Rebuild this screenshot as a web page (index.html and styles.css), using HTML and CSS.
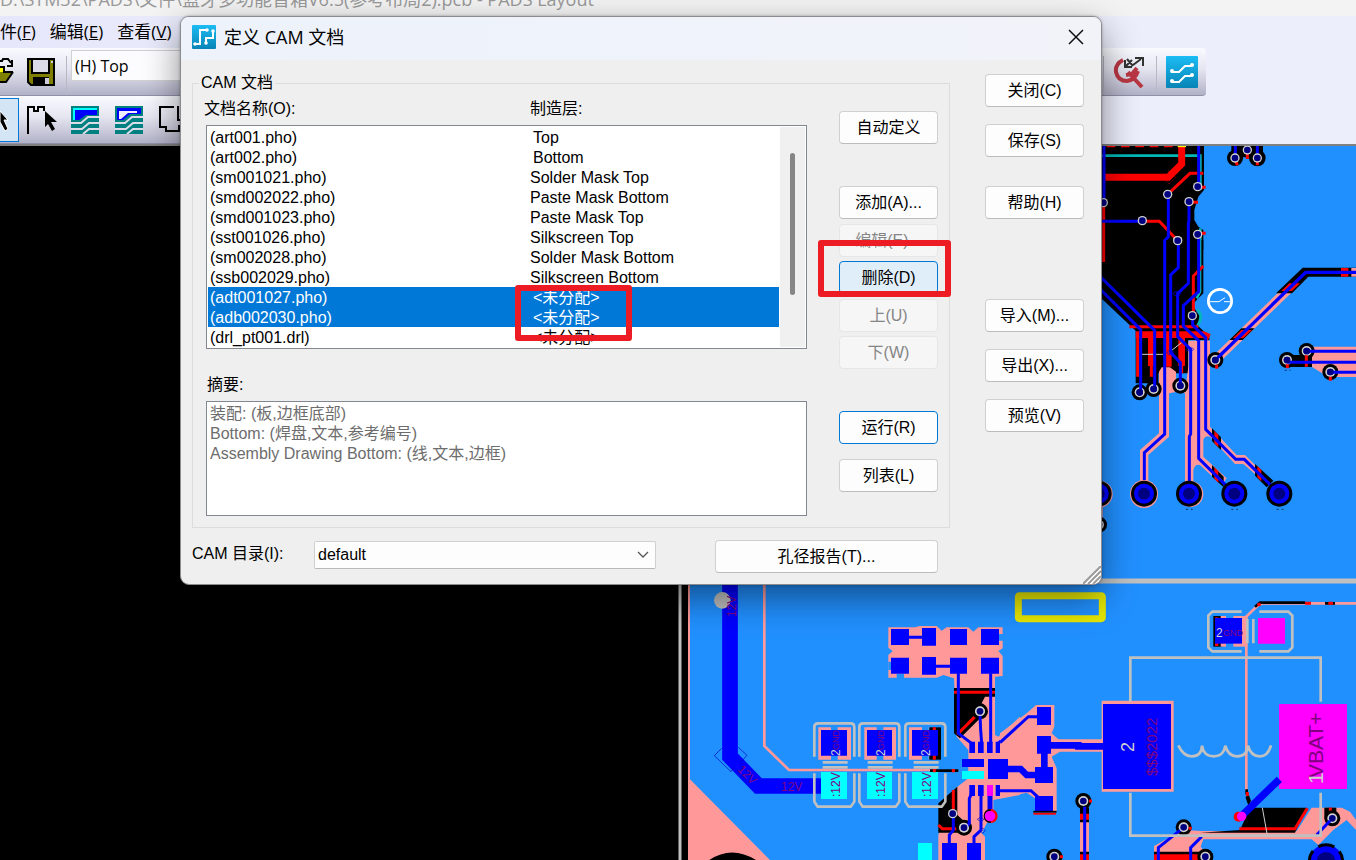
FILE: index.html
```html
<!DOCTYPE html>
<html lang="zh-CN">
<head>
<meta charset="utf-8">
<title>PADS Layout</title>
<link rel="stylesheet" href="styles.css">
</head>
<body>
<div class="app">
  <header class="titlebar"><span>D:\STM32\PADS\文件\蓝牙多功能音箱V6.5(参考布局2).pcb - PADS Layout</span></header>
  <nav class="menubar">
    <button type="button">件(<u>F</u>)</button>
    <button type="button">编辑(<u>E</u>)</button>
    <button type="button">查看(<u>V</u>)</button>
  </nav>
  <div class="toolbar-area">
    <div class="toolbar toolbar-main">
      <button type="button" class="tool tool-open" aria-label="打开">
        <svg width="14" height="28" viewBox="0 0 14 28"><path d="M0 3h2l1-2h5l3 4M12 2v6H7" fill="none" stroke="#000" stroke-width="2"/><path d="M0 10h4v5H0z" fill="#ff0"/><path d="M0 14h13l-7 11H0z" fill="#808000"/><path d="M0 9h4v5h9M13 14L6 24H0" fill="none" stroke="#000" stroke-width="2"/></svg>
      </button>
      <button type="button" class="tool" aria-label="保存">
        <svg width="28" height="28" viewBox="0 0 28 28"><path d="M1 1h26v26H4l-3-3z" fill="#808000" stroke="#000" stroke-width="2"/><path d="M5 1h17v14H5z" fill="#dcdce8" stroke="#000" stroke-width="2"/><path d="M6 19h16v8H6z"/><path d="M18 20h4v6h-4z" fill="#ccd"/><path d="M24 3h2v2h-2z" fill="#ccd"/></svg>
      </button>
      <i class="sep"></i>
      <select class="layer" aria-label="层"><option>(H) Top</option></select>
      <i class="sep push"></i>
      <button type="button" class="tool tool-end" aria-label="快速缩放">
        <svg width="32" height="32" viewBox="0 0 32 32"><path d="M10 4Q2 8 3 16Q5 25 14 25Q22 24 25 15M15 16l14 15M13 19l6-1 5-6" fill="none" stroke="#b83743" stroke-width="4"/><path d="M12 11l7-7M20 9l8-6M12 4v7h7M22 2h8v8M14 3l6 7" fill="none" stroke="#333" stroke-width="2"/></svg>
      </button>
      <i class="sep"></i>
      <button type="button" class="tool tool-end" aria-label="布线">
        <svg width="32" height="32" viewBox="0 0 32 32"><defs><linearGradient id="sky" x2="0" y2="1"><stop stop-color="#1bbcf4"/><stop offset="1" stop-color="#0784b6"/></linearGradient></defs><rect width="32" height="32" rx="1" fill="url(#sky)"/><g fill="none" stroke="#fff" stroke-width="2"><path d="M5 16h8l6-6h6M5 26h8l6-6h6"/><g fill="#fff"><circle cx="6" cy="15" r="1"/><circle cx="26" cy="9" r="1"/><circle cx="6" cy="25" r="1"/><circle cx="26" cy="19" r="1"/></g></g></svg>
      </button>
    </div>
    <div class="toolbar toolbar-draw">
      <button type="button" class="tool tool-active" aria-label="选择">
        <svg width="17" height="28" viewBox="0 0 17 28"><path d="M0 5l8 9H4l4 9-3 2-5-9z" stroke="#fff" stroke-width="1"/></svg>
      </button>
      <button type="button" class="tool tool-draw" aria-label="绘图">
        <svg width="30" height="28" viewBox="0 0 30 28"><path d="M1 28V1h6v4h4V1h6v4" fill="none" stroke="#000" stroke-width="2"/><path d="M18 5l12 11h-6l4 7-3 2-4-7-3 3z"/></svg>
      </button>
      <button type="button" class="tool" aria-label="灌铜">
        <svg width="28" height="28" viewBox="0 0 28 28"><path d="M0 0h28v28H0z" fill="#008080"/><path d="M2 2h24v2H4v10H2z" fill="#0ff"/><path d="M4 4h22v5H15l-7 5H4z" fill="#00f"/><path d="M28 11H17l-7 6H0M28 17H18l-7 6H0M28 23H18l-6 5" fill="none" stroke="#dcdce8" stroke-width="2"/></svg>
      </button>
      <button type="button" class="tool" aria-label="覆铜平面">
        <svg width="28" height="28" viewBox="0 0 28 28"><path d="M0 0h28v28H0z" fill="#008080"/><path d="M2 2h24v6H15l-7 6H2z" fill="#00f"/><path d="M4 5h18v2h-9l-7 6H4z" fill="#eef"/><path d="M28 11H17l-7 6H0M28 17H18l-7 6H0M28 23H18l-6 5" fill="none" stroke="#dcdce8" stroke-width="2"/></svg>
      </button>
      <button type="button" class="tool" aria-label="板框">
        <svg width="28" height="28" viewBox="0 0 28 28"><path d="M15 1H1v20h6v4h13v-6M19 0v14h8" fill="none" stroke="#000" stroke-width="2"/></svg>
      </button>
    </div>
  </div>
  <main class="workspace">
    <svg class="board" viewBox="0 146 1356 714" preserveAspectRatio="xMinYMin slice" aria-label="PCB">
      <defs>
        <g id="via"><circle r="14" fill="#d0d0d0"/><circle r="10" fill="#000080"/></g>
        <g id="bvia"><circle r="24" fill="#000"/><circle r="15" fill="#d0d0d0"/><circle r="10" fill="#000080"/></g>
        <g id="pad"><circle r="39" fill="#000"/><circle r="30" fill="#00f"/><circle r="18" fill="#000080"/></g>
      </defs>
      <path d="M688 146h668v714H688z" fill="#2190ff"/>
      <path d="M680 581H1356" stroke="#c0c0c0" stroke-width="5"/><path d="M680 581V860" stroke="#c0c0c0" stroke-width="3"/>

      <g transform="translate(1090 0) scale(.33333)" fill="none">
        <path d="M33 437H342V570L325 590 313 630V660L325 680 340 690V750H33zM424 437h95v35h-95z" fill="#000"/>
        <g fill="#000"><circle cx="435" cy="474" r="24"/><circle cx="502" cy="474" r="25"/></g>
        <path d="M436 437v30M502 437v30" stroke="#00f" stroke-width="9"/>
        <path d="M472 455v22M436 480l6 16M502 480v16" stroke="#f00" stroke-width="9"/>
        <path d="M33 467H331V570M331 685V750" stroke="#00b8b8" stroke-width="8"/>
        <path d="M50 439H263" stroke="#f00" stroke-width="5" stroke-dasharray="26 17"/>
        <path d="M45 532H235L275 492V440" stroke="#f00" stroke-width="21"/><path d="M263 439h25" stroke="#ff0" stroke-width="5"/>
        <path d="M222 535l15 17 20-20-22-20" stroke="#f00" stroke-width="2" stroke-dasharray="3 3"/>
        <path d="M233 583L300 520H340M157 664H208L263 722M323 562h24M300 607h24M323 700h24M41 620V750" stroke="#f00" stroke-width="9"/>
        <path d="M42 437V608M326 437V560M235 590V710L224 722V750M297 605V660L295 670V750M264 722V750M326 703V750M33 664H157" stroke="#00f" stroke-width="9"/>
        <use href="#via" x="233" y="583"/><use href="#via" x="297" y="605"/><use href="#via" x="323" y="560"/><use href="#via" x="157" y="662"/><use href="#via" x="263" y="722"/><use href="#via" x="323" y="703"/><use href="#via" x="40" y="608"/><use href="#via" x="435" y="474"/><use href="#via" x="472" y="450"/><use href="#via" x="502" y="474"/>
      </g>

      <g transform="translate(1090 240) scale(.33333)" fill="none">
        <path d="M33 0H340V160L320 180 307 195 320 215 332 232 322 255 358 290V300H295V400H205V430H137V272L33 174z" fill="#000"/>
        <path d="M330 0V155L320 175M322 208q20 20 0 50" stroke="#00b8b8" stroke-width="8"/>
        <path d="M295 302H360V560L440 645H465L520 700 510 715 460 672H435L360 590Q345 585 340 600V650L410 715 395 735 330 675Q315 670 310 690V730H285V460L262 455 237 460V590L175 645V730H150V630L207 580V395L215 382H240L258 395V420H290L295 380z" fill="#f99"/>
        <path d="M41 0V66M118 260H325" stroke="#f00" stroke-width="9"/>
        <path d="M137 284H340L358 292M184 284V378M235 284V380M275 284V378" stroke="#f00" stroke-width="20"/>
        <path d="M143 290V410M184 370V410M275 370V400M340 78L310 108V215" stroke="#f00" stroke-width="9"/>
        <path d="M155 343h64M244 332l38-30" stroke="#d0d0d0" stroke-width="3"/>
        <path d="M377 340L614 110H654L417 340 385 370z" fill="#f99"/>
        <path d="M418 300L454 265H494L458 300zM558 160L638 83H798V110H655L606 160z" fill="#000"/>
        <path d="M428 295L454 270H486L460 295zM574 153L598 130H630L606 153z" fill="#f00"/><path d="M753 97h22" stroke="#f00" stroke-width="26"/><path d="M784 97h14" stroke="#f99" stroke-width="26"/>
        <path d="M376 360L647 97H798" stroke="#00f" stroke-width="10"/>
        <path d="M366 565l27 27v38l-27-27zM495 672l55 50-20 20-35-35zM366 675l35 35v32l-35-32z" fill="#000"/>
        <path d="M373 572l12 12v38l-12-12zM502 678l12 12v34l-12-12zM373 682l12 12v34l-12-12z" fill="#f00"/>
        <path d="M224 0V582L163 638V725M295 0V130L263 160V290L302 328V582L298 590V725M326 0V155L280 197V258L326 302V655L432 760M308 230V255L347 293V568L437 658H463L567 760M265 0V83L242 105V338L271 368V435M33 112L194 271V447M33 150L152 269V457" stroke="#00f" stroke-width="9"/>
        <g stroke="#00f" stroke-width="2"><ellipse cx="261" cy="161" rx="11" ry="6"/><ellipse cx="242" cy="338" rx="10" ry="6"/><ellipse cx="300" cy="328" rx="11" ry="5"/></g>
        <circle cx="390" cy="183" r="35" stroke="#fff" stroke-width="8"/><path d="M360 185h27l18-12M402 185h18" stroke="#fff" stroke-width="3"/>
        <path d="M655 320H798V411H715L665 380z" fill="#f99"/><path d="M590 345h76v36h-76z" fill="#000"/>
        <path d="M28 790v50" stroke="#f99" stroke-width="20"/>
        <g fill="#f99"><circle cx="162" cy="762" r="42"/><circle cx="301" cy="762" r="39"/><circle cx="28" cy="762" r="40"/></g>
        <use href="#pad" x="162" y="761"/><use href="#pad" x="297" y="761"/><use href="#pad" x="433" y="761"/><use href="#pad" x="568" y="761"/><use href="#pad" x="26" y="761"/>
        <use href="#bvia" x="149" y="457"/><use href="#bvia" x="191" y="447"/><use href="#bvia" x="271" y="437"/><use href="#bvia" x="376" y="360"/><use href="#bvia" x="591" y="360"/><use href="#bvia" x="650" y="333"/><use href="#bvia" x="721" y="396"/><use href="#bvia" x="27" y="854"/>
        <use href="#via" x="263" y="2"/><use href="#via" x="307" y="227"/>
        <path d="M380 374v12M592 373v12M649 346v34M721 410v12" stroke="#f00" stroke-width="9"/>
        <path d="M650 334H798M592 367H798M720 397H798M376 360l20-19M152 430v27M194 420v27M271 415v20" stroke="#00f" stroke-width="9"/>
        <g fill="#000080"><circle cx="149" cy="457" r="10"/><circle cx="191" cy="447" r="10"/><circle cx="271" cy="437" r="10"/><circle cx="376" cy="360" r="10"/><circle cx="591" cy="360" r="10"/><circle cx="650" cy="333" r="10"/><circle cx="721" cy="396" r="10"/></g>
        <path d="M288 808h20M424 808h20M560 808h20M584 391h18" stroke="#000" stroke-width="2" stroke-dasharray="6 9"/>
      </g>

      <g transform="translate(670 570) scale(.33333)" fill="none">
        <path d="M57 42V625L300 870H57z" fill="#f99"/><path d="M60 42V625L305 870H1050V42z" fill="#2190ff"/><path d="M57 42V870" stroke="#f99" stroke-width="6"/>
        <path d="M118 870Q185 825 258 870z" fill="#000"/>
        <path d="M283 42V528L357 600H800" stroke="#f99" stroke-width="8"/>
        <path d="M180 42V560L265 648H455" stroke="#00f" stroke-width="47"/><circle cx="157" cy="91" r="25" fill="#c0c0c0"/>
        <path d="M155 535l-22 22 50 48 8-12M205 532l26 24-20 22" stroke="#0000c0" stroke-width="2"/>
        <path d="M655 172H735L750 168H800L815 182 830 172H895L910 185 925 172H998V235L985 243 998 258V318L975 320V495L985 500 1050 440V870H805V795L850 660 895 625V540L860 500 852 325 820 315 800 323H655V255L668 243 655 233z" fill="#f99"/>
        <path d="M680 312h22v12h-22zM985 192h14v20h-14zM655 275h8v25h-8z" fill="#2190ff"/>
        <path d="M945 870V800L935 790 970 720V690L1050 675V870z" fill="#2190ff"/>
        <path d="M852 354H975V380H945L935 400 950 425 870 505 852 490zM780 598h85v8h-85zM805 700L862 650V735L905 775 870 788H805z" fill="#000"/>
        <path d="M852 367H975M930 425L862 493M850 660V735M805 765l12 11h65" stroke="#f00" stroke-width="9"/>
        <use href="#bvia" x="930" y="424"/><use href="#bvia" x="882" y="773"/>
        <path d="M717 202h40M797 289h45M865 310V490L905 520M962 310V520M930 435L932 480 935 520M985 520L1050 458M1010 595H1050M985 661H1050M908 665L898 685V760L887 773M850 740V780L838 795V820M933 675V780L912 800V820" stroke="#00f" stroke-width="9"/>
        <path d="M663 177h54v48h-54zM756 174h42v53h-42zM840 177h51v48h-51zM933 177h54v48h-54zM663 263h54v48h-54zM756 261h42v53h-42zM840 263h51v48h-51zM933 263h54v48h-54zM898 515h17v34h-17zM924 515h17v34h-17zM951 515h17v34h-17zM977 515h18v34h-18zM876 567h66v24h-66zM954 567h60v60h-60zM898 645h17v33h-17zM924 645h17v33h-17zM977 645h18v33h-18zM816 819h45v51h-45zM891 819h42v51h-42zM1010 590h40v25h-40z" fill="#00f"/>
        <path d="M876 603h66v24h-66zM744 819h42v51h-42zM453 606h78v81h-78zM591 606h75v81h-75zM726 606h78v81h-78z" fill="#0ff"/>
        <path d="M951 645h18v33h-18z" fill="#f0f"/><path d="M960 678v50" stroke="#00f" stroke-width="15"/><circle cx="962" cy="738" r="21" fill="#f00"/><path d="M962 717a21 21 0 0 0 0 42" fill="#000"/><circle cx="960" cy="738" r="16" fill="#f0f"/>
        <path d="M445 472h98v97h-98zM583 472h95v97h-95zM717 472h60v97h-60z" fill="#f99"/><path d="M778 472h35v97h-35z" fill="#000"/><path d="M793 472v97M793 597v10M850 597v10" stroke="#f00" stroke-width="9"/>
        <path d="M483 470h20v100h-20zM620 470h20v100h-20zM756 470h20v100h-20z" fill="#2190ff"/>
        <path d="M453 480h78v77h-78zM591 480h75v77h-75zM726 480h78v77h-78z" fill="#00f"/>
        <path id="cap" d="M433 560V470Q433 460 445 460H542Q553 460 553 472V560M433 610V695L443 710H542L553 695V610M458 577h75M458 592h75" stroke="#c0c0c0" stroke-width="8"/>
        <use href="#cap" x="135"/><use href="#cap" x="273"/>
        <use href="#via" x="930" y="424"/><use href="#via" x="882" y="773"/><use href="#via" x="848" y="731"/>
        <path d="M922 748l10-7 10 7-10 7zM930 782l8-8 8 8-8 8z" stroke="#00c" stroke-width="2"/>
      </g>

      <g transform="translate(1000 570) scale(.33333)" fill="none">
        <rect x="55" y="77" width="252" height="69" rx="3" stroke="#e6e600" stroke-width="21"/>
        <path d="M0 490L80 430 108 405H163V470L155 490 175 508H305V392H521V665H305V545H180L155 560 170 595V725H105V685L80 668 0 685z" fill="#f99"/>
        <path d="M0 518L85 440H115M0 662H93L115 682" stroke="#00f" stroke-width="9"/><path d="M150 526H235V529H310M133 545v50M0 597H62L80 615H110" stroke="#00f" stroke-width="20"/>
        <path d="M111 411h42v54h-42zM111 498h42v53h-42zM105 591h54v48h-54zM105 678h54v46h-54zM0 567h24v60H0zM309 402h204v255H309z" fill="#00f"/><path d="M100 731h68" stroke="#f00" stroke-width="6"/><path d="M100 725h70" stroke="#000" stroke-width="5"/>
        <path d="M739 660V140L775 105 790 100H1068" stroke="#f99" stroke-width="8"/>
        <path d="M765 110l15-12H915M975 100h30M740 658v12l10 25" stroke="#000" stroke-width="8"/><path d="M915 100h18M985 100h14M772 105l10-3M742 666v12" stroke="#f00" stroke-width="9"/>
        <path d="M640 138h28v92h-28z" fill="#000"/><path d="M662 138h80v92h-80z" fill="#f99"/><path d="M650 142v86" stroke="#f00" stroke-width="10"/><path d="M678 136h22v96h-22z" fill="#2190ff"/><path d="M645 144h81v77h-81z" fill="#00f"/><path d="M774 144h81v77h-81zM837 402h204v255H837z" fill="#f0f"/>
        <path d="M725 125H637L625 137V232L637 244H725M778 125H865L877 137V232L865 244H778M742 147v73M760 147v73" stroke="#c0c0c0" stroke-width="8"/>
        <path d="M391 395V263H962V395" stroke="#c0c0c0" stroke-width="8"/>
        <path d="M535 526q15 33 40 33 30 0 31-32 5 32 35 32 30 0 35-32 8 32 35 32 30 0 33-32 8 32 35 32 25 0 34-33" stroke="#c0c0c0" stroke-width="8"/>
        <path d="M605 783H890L935 713H1025L1050 725 1068 750V780L1040 750 1000 780 955 825 935 808H610L602 830 615 845V870H462V828L550 780z" fill="#f99"/>
        <path d="M750 713H920L885 788H600L720 780z" fill="#000"/><path d="M718 776H885L922 715" stroke="#f00" stroke-width="9"/><path d="M973 713h36v30h-36z" fill="#000"/><path d="M991 713v20" stroke="#f00" stroke-width="9"/><path d="M740 680l12 35" stroke="#000" stroke-width="8"/>
        <path d="M725 738L838 628" stroke="#00f" stroke-width="22"/><circle cx="716" cy="740" r="15" fill="#f00"/><circle cx="725" cy="739" r="14" fill="#f0f"/><path d="M787 713l14 78" stroke="#d0d0d0" stroke-width="3"/>
        <path d="M240 710h27v160h-27z" fill="#f99"/><path d="M240 712h27v45h-27zM240 845h27v25h-27zM462 845h150v25h-150z" fill="#000"/><path d="M240 740h27M240 862h27M462 862h150" stroke="#f00" stroke-width="18"/>
        <circle cx="978" cy="874" r="50" fill="#00f" stroke="#000" stroke-width="9" stroke-dasharray="50 20"/><circle cx="978" cy="874" r="28" fill="#000080"/>
        <use href="#bvia" x="250" y="693"/><use href="#bvia" x="163" y="860"/><use href="#bvia" x="551" y="772"/><use href="#bvia" x="616" y="860"/><use href="#bvia" x="997" y="745"/>
        <path d="M254 710V870M540 781L475 833V870M605 800L572 833V870M990 752L950 795" stroke="#00f" stroke-width="9"/>
        <path d="M391 668V797H962V668" stroke="#c0c0c0" stroke-width="8"/>
        <path d="M267 693h9M180 860h9M566 775h9" stroke="#f00" stroke-width="9"/>
      </g>

      <g class="silk">
        <g class="s12" fill="#800080">
          <text transform="translate(736 617) rotate(-90)">12V</text>
          <text transform="translate(737 770) rotate(45)">12V</text>
          <text x="781" y="791">12V</text>
          <text transform="translate(840 797) rotate(-90)">:12V</text><text transform="translate(885 797) rotate(-90)">:12V</text><text transform="translate(931 797) rotate(-90)">:12V</text>
        </g>
        <g class="s9" fill="#800080">
          <text transform="translate(839 750) rotate(-90)">GND</text><text transform="translate(884 750) rotate(-90)">GND</text><text transform="translate(929 750) rotate(-90)">GND</text>
          <text x="1223" y="636">GND</text>
        </g>
        <g class="s12" fill="#d0d0d0">
          <text transform="translate(840 756) rotate(-90)">2</text><text transform="translate(885 756) rotate(-90)">2</text><text transform="translate(930 756) rotate(-90)">2</text>
          <text x="1216" y="637">2</text>
        </g>
        <text class="s18" fill="#d0d0d0" transform="translate(1134 752) rotate(-90)">2</text>
        <text class="s15" fill="#800080" transform="translate(1157 776) rotate(-90)">$$$2022</text>
        <text class="s21" fill="#800080" transform="translate(1323 778) rotate(-90)">VBAT+</text>
        <text class="s21" fill="#d0d0d0" transform="translate(1323 784) rotate(-90)">1</text>
      </g>
    </svg>
  </main>

  <section class="dialog" role="dialog" aria-labelledby="dlg-title">
    <header class="dialog-head">
      <svg width="24" height="24" viewBox="0 0 24 24"><rect width="24" height="24" rx="1" fill="url(#sky)"/><path d="M3 19h5V5h7M15 18h-1v-5h7V6" fill="none" stroke="#fff" stroke-width="2"/><g fill="#fff"><circle cx="3" cy="19" r="1.8"/><circle cx="15" cy="5" r="1.8"/><circle cx="14" cy="18" r="1.8"/><circle cx="21" cy="6" r="1.8"/></g></svg>
      <h1 id="dlg-title">定义 CAM 文档</h1>
      <button type="button" class="close" aria-label="关闭窗口"><svg width="16" height="16" viewBox="0 0 16 16"><path d="M1 1l14 14M15 1L1 15" stroke="#111" stroke-width="1.5"/></svg></button>
    </header>
    <div class="dialog-body">
      <div class="left">
        <fieldset class="group">
          <legend>CAM 文档</legend>
          <div class="group-grid">
            <div class="docs">
              <div class="heads"><span>文档名称(O):</span><span>制造层:</span></div>
              <div class="listbox">
                <table>
                  <tbody>
                    <tr><td>(art001.pho)</td><td class="in">Top</td></tr>
                    <tr><td>(art002.pho)</td><td class="in">Bottom</td></tr>
                    <tr><td>(sm001021.pho)</td><td>Solder Mask Top</td></tr>
                    <tr><td>(smd002022.pho)</td><td>Paste Mask Bottom</td></tr>
                    <tr><td>(smd001023.pho)</td><td>Paste Mask Top</td></tr>
                    <tr><td>(sst001026.pho)</td><td>Silkscreen Top</td></tr>
                    <tr><td>(sm002028.pho)</td><td>Solder Mask Bottom</td></tr>
                    <tr><td>(ssb002029.pho)</td><td>Silkscreen Bottom</td></tr>
                    <tr class="sel"><td>(adt001027.pho)</td><td class="in">&lt;未分配&gt;</td></tr>
                    <tr class="sel"><td>(adb002030.pho)</td><td class="in">&lt;未分配&gt;</td></tr>
                    <tr><td>(drl_pt001.drl)</td><td class="in">&lt;未分配&gt;</td></tr>
                  </tbody>
                </table>
                <div class="scroll"><div class="thumb"></div></div>
              </div>
              <label class="sum-label" for="summary">摘要:</label>
              <textarea id="summary" class="summary" disabled>装配: (板,边框底部)
Bottom: (焊盘,文本,参考编号)
Assembly Drawing Bottom: (线,文本,边框)</textarea>
            </div>
            <div class="actions">
              <button type="button" class="btn">自动定义</button>
              <button type="button" class="btn gap-l">添加(A)...</button>
              <button type="button" class="btn step" disabled>编辑(E)...</button>
              <button type="button" class="btn hot">删除(D)</button>
              <button type="button" class="btn step" disabled>上(U)</button>
              <button type="button" class="btn" disabled>下(W)</button>
              <button type="button" class="btn primary gap-l">运行(R)</button>
              <button type="button" class="btn gap-s">列表(L)</button>
            </div>
          </div>
        </fieldset>
        <div class="footer">
          <label for="dir">CAM 目录(I):</label>
          <div class="combo"><select id="dir"><option>default</option></select><svg width="12" height="8" viewBox="0 0 12 8"><path d="M1 1l5 5 5-5" fill="none" stroke="#555" stroke-width="1.3"/></svg></div>
          <button type="button" class="btn report">孔径报告(T)...</button>
        </div>
      </div>
      <div class="side">
        <button type="button" class="btn">关闭(C)</button>
        <button type="button" class="btn">保存(S)</button>
        <button type="button" class="btn side-help">帮助(H)</button>
        <button type="button" class="btn side-io">导入(M)...</button>
        <button type="button" class="btn">导出(X)...</button>
        <button type="button" class="btn">预览(V)</button>
      </div>
    </div>
    <svg class="grip" width="18" height="18" viewBox="0 0 18 18"><path d="M0 18L18 0v18z" fill="#fff"/><path d="M0 18L18 0M5 18L18 5M10 18l8-8" stroke="#9a9a9a" stroke-width="2"/></svg>
    <div class="mark mark-layers"></div>
    <div class="mark mark-delete"></div>
  </section>
</div>
</body>
</html>
```
FILE: styles.css
```css
* { box-sizing: border-box; }
body { margin: 0; background: #000; font: 16px/20px "Liberation Sans", Arial, "Noto Sans CJK SC", sans-serif; color: #000; }
button, select, textarea { font: inherit; color: inherit; margin: 0; }
.app { position: relative; display: flex; flex-direction: column; height: 100vh; overflow: hidden; }

.titlebar { height: 16px; display: flex; align-items: flex-end; overflow: hidden; background: #f3f3f3; color: #999; font: 18px/34px "Open Sans", "Noto Sans CJK SC", sans-serif; white-space: nowrap; }
.menubar { display: flex; gap: 14px; height: 32px; background: linear-gradient(90deg, #e6e7fa, #eceefc 30%); }
.menubar button { border: 0; padding: 0; background: none; font: 17px/32px "Open Sans", "Noto Sans CJK SC", sans-serif; }
.toolbar-area { background: #eceefc; border-bottom: 2px solid #808080; }
.toolbar { display: flex; align-items: center; height: 48px; background: linear-gradient(#fafbff, #e4e5f0 45%, #b2b2c8); border-bottom: 1px solid #9090a8; border-radius: 0 4px 4px 0; }
.toolbar-main { margin-right: 150px; padding-right: 8px; }
.toolbar-draw { margin-right: 30%; gap: 16px; }
.tool { display: flex; border: 0; padding: 0; background: none; }
.tool-open { margin-right: 13px; }
.tool-draw { margin-right: -2px; }
.sep { width: 1px; height: 38px; margin: 6px 4px 0 11px; background: #b8b8c4; }
.tool-end { margin-left: 5px; }
.push { margin-left: auto; }
.layer { width: 320px; height: 31px; margin-bottom: 12px; padding: 0 3px; appearance: none; border: 1px solid #d0d0d0; border-radius: 0; background: #fcfcfe; font-family: "Open Sans", sans-serif; }
.tool-active { width: 19px; height: 44px; margin-right: -8px; align-items: center; border: 1px solid #0078d7; border-left: 0; background: #d4e5f5; }

.workspace { flex: 1; min-height: 0; background: #000; }
.board { display: block; width: 100%; height: 100%; }
.silk { font-family: "Liberation Sans Narrow", "Liberation Sans", sans-serif; }
.s9 { font-size: 9px; }
.s12 { font-size: 12px; }
.s15 { font-size: 15px; }
.s18 { font-size: 18px; }
.s21 { font-size: 21px; }

.dialog { position: absolute; left: 180px; top: 16px; width: 922px; border: 1px solid #8c8c90; border-radius: 9px; background: #efefef; box-shadow: 0 0 3px rgba(0, 0, 0, .3), 0 14px 36px rgba(0, 0, 0, .45); }
.dialog-head { display: flex; align-items: center; gap: 8px; height: 43px; padding: 0 17px 3px 11px; border-radius: 8px 8px 0 0; background: linear-gradient(90deg, #edf2fb, #f1f3f9); }
.dialog-head h1 { margin: 0; font: 18px/24px "Open Sans", "Noto Sans CJK SC", sans-serif; }
.close { display: flex; margin-left: auto; border: 0; padding: 0; background: none; }
.dialog-body { display: grid; grid-template-columns: 1fr 99px; gap: 35px; padding: 14px 17px 11px 11px; }
.left { min-width: 0; }
.group { min-width: 0; margin: 0; padding: 0 11px 11px 13px; border: 1px solid #dcdcdc; }
.group legend { margin-left: -7px; padding: 0 2px; line-height: 18px; }
.group-grid { display: grid; grid-template-columns: 1fr 99px; gap: 32px; }
.docs { display: flex; flex-direction: column; padding-top: 7px; min-width: 0; }
.heads { display: grid; grid-template-columns: 324px 1fr; margin-left: -2px; padding: 0 0 6px; }
.heads span:last-child { padding-left: 2px; }
.listbox { display: flex; height: 224px; padding: 1px; overflow: hidden; border: 1px solid #828790; background: #fff; }
.listbox table { flex: 1; border-collapse: collapse; table-layout: fixed; align-self: flex-start; }
.listbox td { height: 20px; padding: 2px 2px 0; line-height: 18px; white-space: nowrap; }
.listbox td:first-child { width: 320px; }
.listbox td.in { padding-left: 5px; }
.sel { background: #0078d7; color: #fff; }
.scroll { width: 25px; margin-left: 1px; padding: 26px 0 0 10px; background: #f0f0f0; }
.thumb { width: 5px; height: 142px; border-radius: 3px; background: #868686; }
.sum-label { margin: 26px 0 6px 1px; }
.summary { display: block; width: 100%; height: 115px; padding: 2px 3px; border: 1px solid #828790; border-radius: 0; background: #fff; color: #6d6d6d; resize: none; overflow: hidden; }
.actions { display: flex; flex-direction: column; gap: 4px; padding-top: 19px; }
.btn { height: 33px; padding: 0; border: 1px solid #d0d0d0; border-bottom-color: #bcbcbc; border-radius: 4px; background: #fdfdfd; text-align: center; white-space: nowrap; }
.btn:disabled { border-color: #e6e6e6; background: #f6f6f6; color: #858585; }
.btn.hot { border-color: #0078d4; background: #e0eef9; }
.btn.primary { border-color: #0078d4; }
.step { margin-top: 1px; }
.gap-l { margin-top: 38px; }
.gap-s { margin-top: 11px; }
.footer { display: flex; align-items: flex-start; margin-top: 12px; padding-right: 12px; }
.footer label { width: 122px; line-height: 28px; }
.combo { position: relative; flex: 1; margin: 1px 59px 0 0; }
.combo select { display: block; width: 100%; height: 28px; padding: 0 3px; appearance: none; border: 1px solid #d0d0d0; border-bottom-color: #b8b8b8; border-radius: 2px; background: #fdfdfd; }
.combo svg { position: absolute; right: 7px; top: 10px; pointer-events: none; }
.report { width: 223px; }
.side { display: flex; flex-direction: column; gap: 17px; }
.side-help { margin-top: 12px; }
.side-io { margin-top: 63px; }
.grip { position: absolute; right: 0; bottom: 0; border-radius: 0 0 8px 0; }
.mark { position: absolute; border: 6px solid #ed1c24; border-radius: 3px; pointer-events: none; }
.mark-layers { left: 334px; top: 268px; width: 117px; height: 56px; }
.mark-delete { left: 637px; top: 223px; width: 133px; height: 57px; }
```
